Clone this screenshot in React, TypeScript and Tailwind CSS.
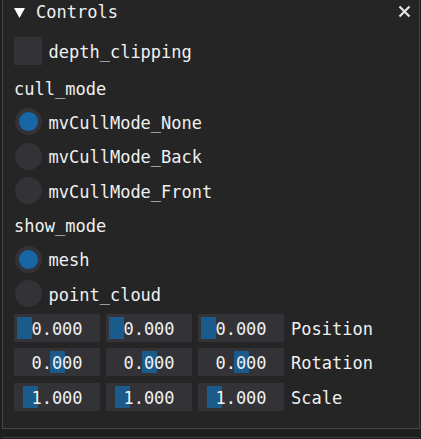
import React from "react";

const font = { fontFamily: '"DejaVu Sans Mono", "Liberation Mono", monospace' };

function Radio({ checked, label }: { checked: boolean; label: string }) {
  return (
    <div className="flex h-[28px] items-center">
      <div className="ml-[1px] flex h-[27px] w-[27px] items-center justify-center rounded-full bg-[#333337]">
        {checked && <div className="h-[19px] w-[19px] rounded-full bg-[#1766a6]" />}
      </div>
      <span className="relative top-[1.5px] ml-[6.5px]">{label}</span>
    </div>
  );
}

function SliderBox({ value, pos }: { value: string; pos: number }) {
  return (
    <div className="relative flex h-[28px] w-[86px] items-center justify-center bg-[#333337]">
      <div
        className="absolute top-[3px] h-[22px] w-[15px] bg-[#1a5b8c]"
        style={{ left: 3 + pos * (86 - 6 - 15) }}
      />
      <span className="relative top-[1.5px]">{value}</span>
    </div>
  );
}

function Row({ values, label }: { values: { v: string; p: number }[]; label: string }) {
  return (
    <div className="flex h-[28px] items-center gap-[6px]">
      {values.map((x, i) => (
        <SliderBox key={i} value={x.v} pos={x.p} />
      ))}
      <span className="relative top-[1.5px] ml-[1px]">{label}</span>
    </div>
  );
}

export default function App() {
  return (
    <div
      className="h-[439px] w-[421px] overflow-hidden bg-[#1f1f1f] text-[17px] leading-none text-[#f0f0f0]"
      style={font}
    >
      <div className="ml-[2px] h-[429px] w-[418px] border-x border-b border-[#454545] bg-[#252526]">
        <div className="flex h-[25px] items-center">
          <svg className="ml-[11px]" width="11" height="10" viewBox="0 0 11 10">
            <polygon points="0,0 11,0 5.5,10" fill="#ffffff" />
          </svg>
          <span className="ml-[11px]">Controls</span>
          <svg className="ml-auto mr-[8px] -mt-[2px]" width="13" height="13" viewBox="0 0 13 13">
            <path d="M1.5 1.5 L11.5 11.5 M11.5 1.5 L1.5 11.5" stroke="#e6e6e6" strokeWidth="2.2" />
          </svg>
        </div>
        <div className="flex flex-col gap-[6.35px] pl-[11px] pt-[12px]">
          <div className="flex h-[28px] items-center">
            <div className="h-[28px] w-[28px] bg-[#333337]" />
            <span className="relative top-[1.5px] ml-[6.5px]">depth_clipping</span>
          </div>
          <div className="mt-[2.3px] flex h-[28px] items-center">
            <span className="relative top-[1.5px]">cull_mode</span>
          </div>
          <Radio checked label="mvCullMode_None" />
          <Radio checked={false} label="mvCullMode_Back" />
          <Radio checked={false} label="mvCullMode_Front" />
          <div className="flex h-[28px] items-center">
            <span className="relative top-[1.5px]">show_mode</span>
          </div>
          <Radio checked label="mesh" />
          <Radio checked={false} label="point_cloud" />
          <Row
            label="Position"
            values={[
              { v: "0.000", p: 0 },
              { v: "0.000", p: 0 },
              { v: "0.000", p: 0 },
            ]}
          />
          <Row
            label="Rotation"
            values={[
              { v: "0.000", p: 0.5 },
              { v: "0.000", p: 0.5 },
              { v: "0.000", p: 0.5 },
            ]}
          />
          <Row
            label="Scale"
            values={[
              { v: "1.000", p: 0.09 },
              { v: "1.000", p: 0.09 },
              { v: "1.000", p: 0.09 },
            ]}
          />
        </div>
      </div>
      <div className="ml-[2px] mt-[8px] h-[1px] w-[418px] bg-[#3a3a3a]" />
    </div>
  );
}
